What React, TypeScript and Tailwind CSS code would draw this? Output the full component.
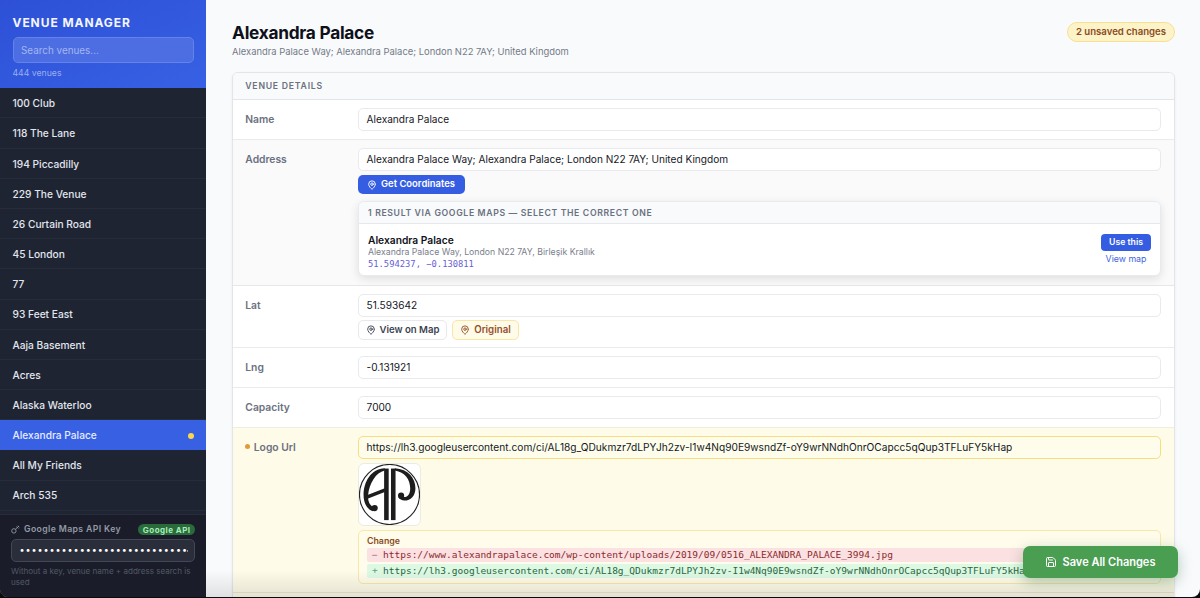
import type { ReactNode } from 'react';
import { MapPin, Save } from 'lucide-react';

const venues = [
  '100 Club',
  '118 The Lane',
  '194 Piccadilly',
  '229 The Venue',
  '26 Curtain Road',
  '45 London',
  '77',
  '93 Feet East',
  'Aaja Basement',
  'Acres',
  'Alaska Waterloo',
  'Alexandra Palace',
  'All My Friends',
  'Arch 535',
];

const LOGO_URL =
  'https://lh3.googleusercontent.com/ci/AL18g_QDukmzr7dLPYJh2zv-I1w4Nq90E9wsndZf-oY9wrNNdhOnrOCapcc5qQup3TFLuFY5kHap';
const OLD_LOGO_URL =
  'https://www.alexandrapalace.com/wp-content/uploads/2019/09/0516_ALEXANDRA_PALACE_3994.jpg';
const ADDRESS = 'Alexandra Palace Way; Alexandra Palace; London N22 7AY; United Kingdom';

function KeyIcon() {
  return (
    <svg className="h-[9px] w-[9px] shrink-0" viewBox="0 0 9 9" fill="none" stroke="#9299a8" strokeWidth="0.9">
      <circle cx="2.9" cy="5.9" r="2.2" />
      <path d="M4.4 4.3 8 1M5.6 1.6 7.2 3.4M6.8 .8 8.3 2.2" />
    </svg>
  );
}

function Sidebar() {
  return (
    <aside className="flex w-[206px] shrink-0 flex-col bg-[#1f2432]">
      <div className="h-[88px] shrink-0 bg-linear-to-br from-[#2d50d6] to-[#3761e4] px-[12.5px] pt-[15px]">
        <h1 className="text-[12px] leading-[15px] font-bold tracking-[0.93px] text-[#f3f6ff]">VENUE MANAGER</h1>
        <div className="mt-[7px] flex h-[26px] items-center rounded-[5px] border border-[#6482e9] bg-[#4d6ee2] px-[7.5px] text-[9.9px] text-[#a3b5f3]">
          Search venues...
        </div>
        <p className="mt-[4px] text-[8.7px] leading-[12px] text-[#9aaef2]">444 venues</p>
      </div>
      <ul className="min-h-0 flex-1 overflow-hidden pt-[0.3px]">
        {venues.map((name) =>
          name === 'Alexandra Palace' ? (
            <li
              key={name}
              className="flex h-[30.18px] items-center justify-between bg-[#3860e3] pt-px pr-[12.5px] pl-[12.5px] text-[10.2px] font-medium text-[#e6ecff]"
            >
              {name}
              <span className="h-[6px] w-[6px] rounded-full bg-[#fbd64e]" />
            </li>
          ) : (
            <li
              key={name}
              className="flex h-[30.18px] items-center border-b border-[#272c3a] px-[12.5px] pt-[2px] text-[10.2px] font-medium text-[#e2e6ee]"
            >
              {name}
            </li>
          ),
        )}
      </ul>
      <div className="h-[83px] shrink-0 border-t border-[#262c39] bg-[#1a1d29] px-[11px] pt-[8px]">
        <div className="flex h-[13px] items-center">
          <KeyIcon />
          <span className="ml-[4px] text-[8.7px] font-semibold tracking-[0.38px] whitespace-nowrap text-[#9299a6]">
            Google Maps API Key
          </span>
          <span className="ml-auto flex h-[11px] items-center rounded-full bg-[#2a6a3b] px-[4.5px] text-[8px] font-bold tracking-[0.46px] whitespace-nowrap text-[#a6ecb8]">
            Google API
          </span>
        </div>
        <div className="mt-[3px] flex h-[23px] w-[184px] items-center rounded-[5px] border border-[#424756] bg-[#2a2e3b] pb-[2px] pl-[7px] text-[9px] text-white">
          {Array.from({ length: 28 }, (_, i) => (
            <span key={i} className="flex w-[6.03px] shrink-0 justify-center">
              •
            </span>
          ))}
          <span className="mt-[2px] h-[2px] w-[1px] bg-[#8a8e99]" />
        </div>
        <p className="mt-[4px] text-[8.05px] leading-[11px] text-[#525866]">
          Without a key, venue name + address search is used
        </p>
      </div>
    </aside>
  );
}

function Row({
  label,
  className,
  changed,
  children,
}: {
  label: string;
  className: string;
  changed?: boolean;
  children: ReactNode;
}) {
  return (
    <div className={`flex shrink-0 border-b pr-[13px] pl-[12.3px] pt-[8px] ${className}`}>
      <div className="flex h-[23px] w-[112.7px] shrink-0 items-center text-[10.3px] font-semibold text-[#6b7180]">
        {changed && <span className="mr-[3.5px] mb-[2px] h-[5px] w-[5px] rounded-full bg-[#e39a35]" />}
        {label}
      </div>
      <div className="min-w-0 flex-1">{children}</div>
    </div>
  );
}

function Field({ value }: { value: string }) {
  return (
    <div className="flex h-[23px] items-center rounded-[5px] border border-[#e8eaed] bg-white px-[7.6px] text-[10.1px] text-[#15181f]">
      {value}
    </div>
  );
}

function ApLogo() {
  return (
    <svg className="mt-[4px] block h-[63px] w-[63px] rounded-[6px] border border-[#ecebe2] bg-white" viewBox="11 16 187 187">
      <circle cx="104.5" cy="109.5" r="92" fill="none" stroke="#222" strokeWidth="3.5" />
      <g fill="#1d1d1d">
        <rect x="88" y="30" width="14" height="158" />
        <rect x="109" y="30" width="14" height="158" />
        <path d="M90 29C48 31 25 70 25 112C25 138 38 157 54 161L58 150C46 145 40 134 39 122L90 102V90L39 110C43 76 62 42 90 36Z" />
        <circle cx="59" cy="151" r="9.5" />
        <path d="M121 29C162 31 184 60 184 90C184 113 170 128 150 128C142 128 135 124 132 118L142 116C158 122 168 109 168 91C168 64 152 41 121 36Z" />
        <circle cx="140" cy="113" r="9.5" />
      </g>
    </svg>
  );
}

function AddressResults() {
  return (
    <div className="mt-[7px] h-[75px] overflow-hidden rounded-[6px] border border-[#e8eaed] bg-white shadow-[0_3px_10px_rgba(0,0,0,0.11)]">
      <div className="flex h-[22px] items-center border-b border-[#e5e7eb] bg-[#f8fafc] px-[9px] pt-[2px] text-[8.7px] font-semibold tracking-[0.64px] text-[#6b7180]">
        1 RESULT VIA GOOGLE MAPS — SELECT THE CORRECT ONE
      </div>
      <div className="flex justify-between px-[9px] pt-[10px]">
        <div className="-mt-px">
          <div className="text-[10.25px] leading-[14px] font-semibold text-[#10131a]">Alexandra Palace</div>
          <div className="text-[8.73px] leading-[11px] text-[#7a808c]">
            Alexandra Palace Way, London N22 7AY, Birleşik Krallık
          </div>
          <div className="font-['DejaVu_Sans_Mono',monospace] text-[8.8px] leading-[12px] text-[#6660d6]">
            51.594237, −0.130811
          </div>
        </div>
        <div className="flex flex-col items-center">
          <button className="flex h-[17px] w-[50px] items-center justify-center rounded-[4px] bg-[#355de2] text-[8.7px] font-semibold text-white">
            Use this
          </button>
          <a className="mt-[2px] text-[8.8px] leading-[12px] text-[#4265dc]">View map</a>
        </div>
      </div>
    </div>
  );
}

export default function App() {
  return (
    <div className="h-[598px] w-[1200px] overflow-hidden bg-[#0b0b0d] pb-[1px] font-['Inter',sans-serif]">
      <div className="relative flex h-[597px] overflow-hidden rounded-b-[8px] bg-[#f9fafc]">
        <Sidebar />
        <main className="flex min-w-0 flex-1 flex-col pr-[25px] pl-[26px]">
          <header className="flex h-[72px] shrink-0 justify-between pt-[22px]">
            <div>
              <h2 className="text-[17.3px] leading-[22px] font-bold tracking-[-0.27px] text-[#0e1119]">Alexandra Palace</h2>
              <p className="text-[9.41px] leading-[15px] text-[#747a87]">{ADDRESS}</p>
            </div>
            <span className="flex h-[20px] w-[108px] items-center justify-center rounded-full border border-[#f8e08e] bg-[#fdf3c9] pt-px text-[9.6px] font-semibold text-[#8a4b22]">
              2 unsaved changes
            </span>
          </header>

          <section className="flex h-[560px] shrink-0 flex-col rounded-t-[6px] border border-[#e3e5ea] bg-white shadow-[0_1px_3px_rgba(0,0,0,0.06)]">
            <div className="flex h-[27px] shrink-0 items-center rounded-t-[5px] border-b border-[#e3e5ea] bg-[#f9fafc] px-[12.3px] pt-[2px] text-[8.7px] font-semibold tracking-[0.75px] text-[#6b7180]">
              VENUE DETAILS
            </div>

            <Row label="Name" className="h-[40px] border-[#eaebee]">
              <Field value="Alexandra Palace" />
            </Row>

            <Row label="Address" className="h-[146px] border-[#e6e7ea] bg-[#fafafb]">
              <Field value={ADDRESS} />
              <button className="mt-[4px] flex h-[19px] w-[107px] items-center justify-center gap-[4px] rounded-[5px] bg-[#355de2] pr-px text-[9.45px] font-semibold text-white">
                <MapPin size={10} strokeWidth={2.2} />
                Get Coordinates
              </button>
              <AddressResults />
            </Row>

            <Row label="Lat" className="h-[62px] border-[#eaebee]">
              <Field value="51.593642" />
              <div className="mt-[3px] flex gap-[5px]">
                <button className="flex h-[20px] w-[89px] items-center justify-center gap-[4px] rounded-[5px] border border-[#e8e9ec] bg-white text-[9.6px] font-semibold text-[#3c4350]">
                  <MapPin size={10} strokeWidth={2.2} />
                  View on Map
                </button>
                <button className="flex h-[20px] w-[67px] items-center justify-center gap-[4px] rounded-[5px] border border-[#f9e6a4] bg-[#fffbe9] text-[9.7px] font-semibold text-[#94502a]">
                  <MapPin size={10} strokeWidth={2.2} />
                  Original
                </button>
              </div>
            </Row>

            <Row label="Lng" className="h-[40px] border-[#eaebee]">
              <Field value="-0.131921" />
            </Row>

            <Row label="Capacity" className="h-[40px] border-[#eeeddf]">
              <Field value="7000" />
            </Row>

            <Row label="Logo Url" changed className="h-[165px] border-[#ebe6d2] bg-[#fefbe8]">
              <div className="flex h-[23px] items-center rounded-[5px] border border-[#f6dd7f] bg-[#fefdeb] px-[7.6px] text-[10.16px] whitespace-nowrap text-[#15181f]">
                {LOGO_URL}
              </div>
              <ApLogo />
              <div className="mt-[4px] h-[54px] rounded-[5px] border border-[#f8e8a8] bg-[#fffceb] px-[8px] pt-[3px]">
                <div className="mb-px text-[8.8px] leading-[13px] font-semibold text-[#8a4b22]">Change</div>
                <div className="flex h-[14px] items-center overflow-hidden rounded-[2px] bg-[#fbe1e2] px-[5px] font-['DejaVu_Sans_Mono',monospace] text-[9.52px] whitespace-nowrap text-[#8c2b2b]">
                  <span className="w-[11px] shrink-0 text-[#b06a6c]">−</span>
                  {OLD_LOGO_URL}
                </div>
                <div className="mt-[2px] flex h-[14px] items-center overflow-hidden rounded-[2px] bg-[#ddf9e4] px-[5px] font-['DejaVu_Sans_Mono',monospace] text-[9.52px] whitespace-nowrap text-[#2a6640]">
                  <span className="w-[11px] shrink-0 text-[#63a077]">+</span>
                  {LOGO_URL}
                </div>
              </div>
            </Row>
            <div className="flex-1 bg-[#fefbe8]" />
          </section>
        </main>

        <div className="pointer-events-none absolute right-[26px] bottom-0 left-[206px] h-[27px] bg-linear-to-b from-black/0 to-black/10" />
        <button className="absolute top-[546px] left-[1023px] flex h-[32px] w-[155px] items-center justify-center gap-[6px] rounded-[7px] bg-[#4a9e52] pr-px text-[11.04px] font-semibold text-white shadow-[0_4px_14px_rgba(40,110,60,0.35)]">
          <Save size={12} strokeWidth={2} />
          Save All Changes
        </button>
      </div>
    </div>
  );
}
